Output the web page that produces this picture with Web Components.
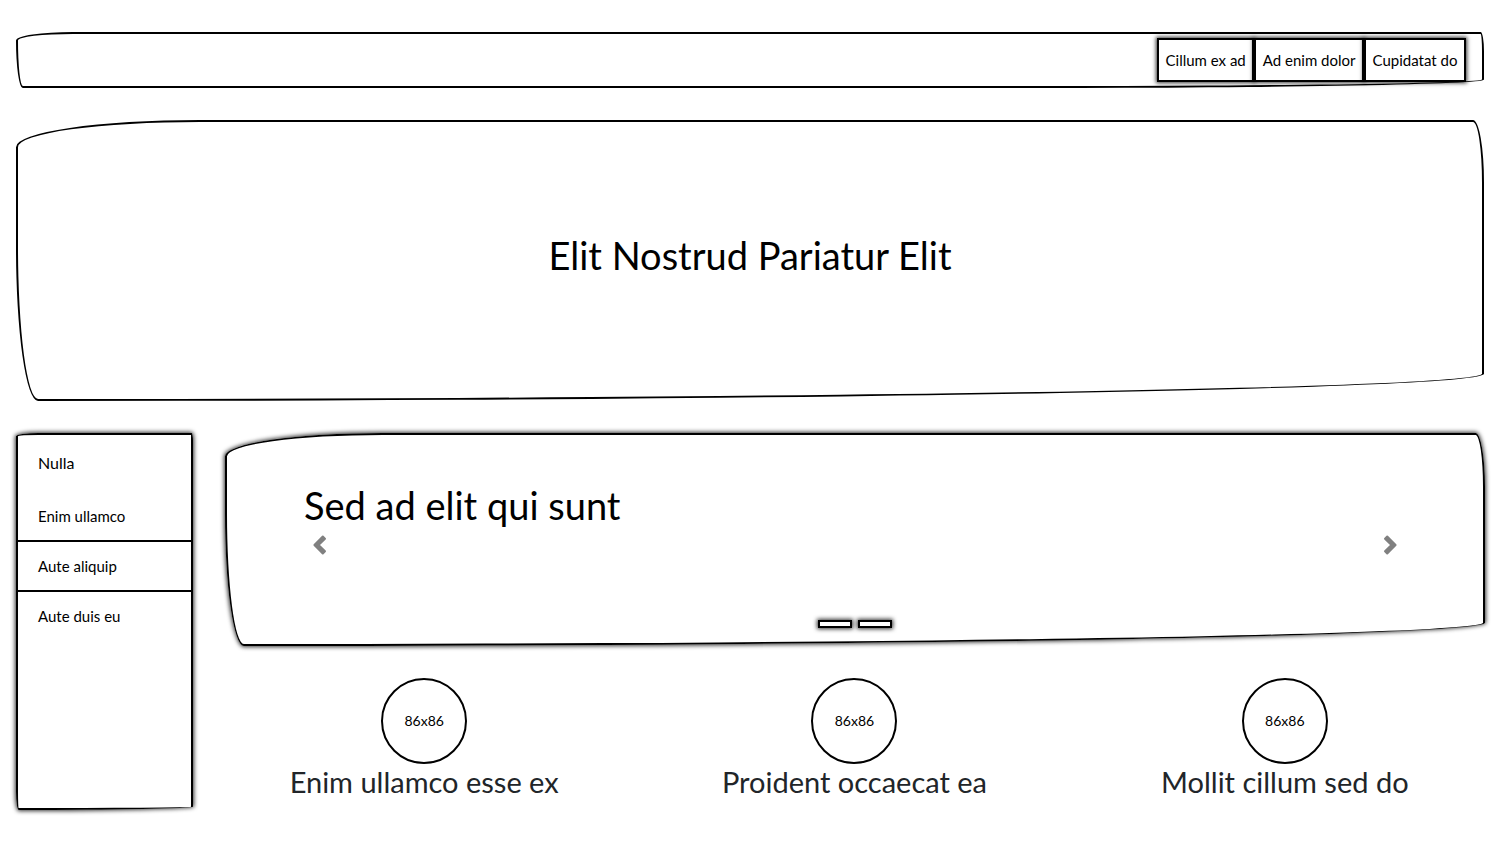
<!DOCTYPE html>
<html lang="en">
<head>
<meta charset="utf-8">
<meta name="viewport" content="width=device-width, initial-scale=1">
<title>Sketch page</title>
<style>
  :root {
    --ink: #000;
    --sketch-radius: 250px 15px 1970px 30px / 37px 85px 37px 210px;
    --sketch-shadow: 0 0 4px 1px rgba(0, 0, 0, .8);
  }
  body { margin: 0; background: #fff; color: var(--ink); font: 15px/24px Lato, "Open Sans", sans-serif; }
</style>
</head>
<body>
<sketch-page>
  <sketch-header slot="header">
    <sketch-button>Cillum ex ad</sketch-button>
    <sketch-button>Ad enim dolor</sketch-button>
    <sketch-button>Cupidatat do</sketch-button>
  </sketch-header>
  <sketch-hero slot="hero">Elit Nostrud Pariatur Elit</sketch-hero>
  <sketch-sidebar slot="sidebar">
    <span slot="title">Nulla</span>
    <sketch-link>Enim ullamco</sketch-link>
    <sketch-link>Aute aliquip</sketch-link>
    <sketch-link>Aute duis eu</sketch-link>
  </sketch-sidebar>
  <sketch-carousel>Sed ad elit qui sunt</sketch-carousel>
  <sketch-features>
    <sketch-feature size="86x86">Enim ullamco esse ex</sketch-feature>
    <sketch-feature size="86x86">Proident occaecat ea</sketch-feature>
    <sketch-feature size="86x86">Mollit cillum sed do</sketch-feature>
  </sketch-features>
</sketch-page>

<script>
  const define = (name, html) => customElements.define(name, class extends HTMLElement {
    constructor() {
      super();
      const template = document.createElement('template');
      template.innerHTML = '<style>*{box-sizing:border-box}:host{box-sizing:border-box}</style>' + html;
      this.attachShadow({ mode: 'open' }).append(template.content.cloneNode(true));
    }
    connectedCallback() {
      const label = this.shadowRoot.querySelector('.size');
      if (label) label.textContent = this.getAttribute('size');
    }
  });

  define('sketch-page', `
    <style>
      :host { display: flex; flex-direction: column; gap: 32px; padding: 32px 15px 32px 16px; }
      .body { display: flex; gap: 32px; }
      main { flex: 1; min-width: 0; display: flex; flex-direction: column; gap: 32px; padding-bottom: 10px; }
    </style>
    <slot name="header"></slot>
    <slot name="hero"></slot>
    <div class="body">
      <slot name="sidebar"></slot>
      <main><slot></slot></main>
    </div>`);

  define('sketch-header', `
    <style>
      :host { display: block; padding-right: 1px; }
      header { display: flex; justify-content: flex-end; padding: 4px 16px; border: 2px solid var(--ink); border-radius: var(--sketch-radius); }
      nav { display: flex; width: 309px; }
    </style>
    <header><nav><slot></slot></nav></header>`);

  define('sketch-button', `
    <style>
      :host { display: flex; flex: 1 0 auto; }
      button { flex: 1; padding: 8px 6px; border: 2px solid var(--ink); background: #fff; color: inherit; font: inherit; white-space: nowrap; box-shadow: var(--sketch-shadow); }
    </style>
    <button type="button"><slot></slot></button>`);

  define('sketch-hero', `
    <style>
      :host { display: block; padding-right: 1px; }
      section { padding: 111px 32px 122px; border: 2px solid var(--ink); border-radius: var(--sketch-radius); text-align: center; }
      h1 { margin: 0; font-size: 38px; line-height: 44px; font-weight: 400; }
    </style>
    <section><h1><slot></slot></h1></section>`);

  define('sketch-sidebar', `
    <style>
      :host { display: flex; flex: 0 0 177px; }
      aside { flex: 1; border: 2px solid var(--ink); border-radius: var(--sketch-radius); box-shadow: var(--sketch-shadow); }
      h2 { margin: 0; padding: 16px 20px 17px; font-size: 16px; line-height: 24px; font-weight: 400; }
    </style>
    <aside><h2><slot name="title"></slot></h2><nav><slot></slot></nav></aside>`);

  define('sketch-link', `
    <style>
      :host { display: block; border-bottom: 2px solid var(--ink); }
      :host(:last-child) { border-bottom: 0; }
      a { display: block; padding: 12px 20px; color: inherit; text-decoration: none; }
    </style>
    <a href="#"><slot></slot></a>`);

  define('sketch-carousel', `
    <style>
      :host { display: block; }
      section { padding: 48px 77px 16px; border: 2px solid var(--ink); border-radius: var(--sketch-radius); box-shadow: var(--sketch-shadow); }
      h2 { margin: 0; font-size: 38px; line-height: 44px; font-weight: 400; }
      .controls { display: flex; justify-content: space-between; padding: 2px 0; }
      .controls button { display: flex; padding: 6px; border: 0; background: none; color: #808080; }
      svg { display: block; width: 20px; height: 20px; fill: currentColor; }
      .indicators { display: flex; justify-content: center; gap: 6px; padding-top: 57px; }
      .indicators button { width: 34px; height: 8px; padding: 0; border: 2px solid var(--ink); background: #fff; box-shadow: var(--sketch-shadow); }
    </style>
    <section aria-label="Carousel">
      <h2><slot></slot></h2>
      <div class="controls">
        <button type="button" aria-label="Previous"><svg viewBox="0 0 20 20"><path d="M3.700 9.300 12.100.8q.7-.7 1.400 0l2.200 2.200q.7.7 0 1.400L10 10l5.700 5.600q.7.7 0 1.400l-2.200 2.200q-.7.7-1.400 0L3.700 10.700q-.7-.7 0-1.400Z"/></svg></button>
        <button type="button" aria-label="Next"><svg viewBox="0 0 20 20"><path d="M16.300 9.300 7.900.8q-.7-.7-1.400 0L4.300 3q-.7.7 0 1.400L10 10l-5.700 5.600q-.7.7 0 1.400l2.200 2.200q.7.7 1.400 0l8.400-8.500q.7-.7 0-1.400Z"/></svg></button>
      </div>
      <div class="indicators">
        <button type="button" aria-label="Slide 1"></button>
        <button type="button" aria-label="Slide 2"></button>
      </div>
    </section>`);

  define('sketch-features', `
    <style>
      :host { display: grid; grid-template-columns: repeat(3, 1fr); margin: 0 -15px 0 -16px; }
    </style>
    <slot></slot>`);

  define('sketch-feature', `
    <style>
      :host { display: flex; flex-direction: column; align-items: center; }
      .size { display: flex; align-items: center; justify-content: center; width: 86px; height: 86px; border: 2px solid var(--ink); border-radius: 50%; font-size: 14px; }
      h3 { margin: 0; font-size: 29px; line-height: 36px; font-weight: 400; color: #212529; }
    </style>
    <div class="size"></div>
    <h3><slot></slot></h3>`);
</script>
</body>
</html>
